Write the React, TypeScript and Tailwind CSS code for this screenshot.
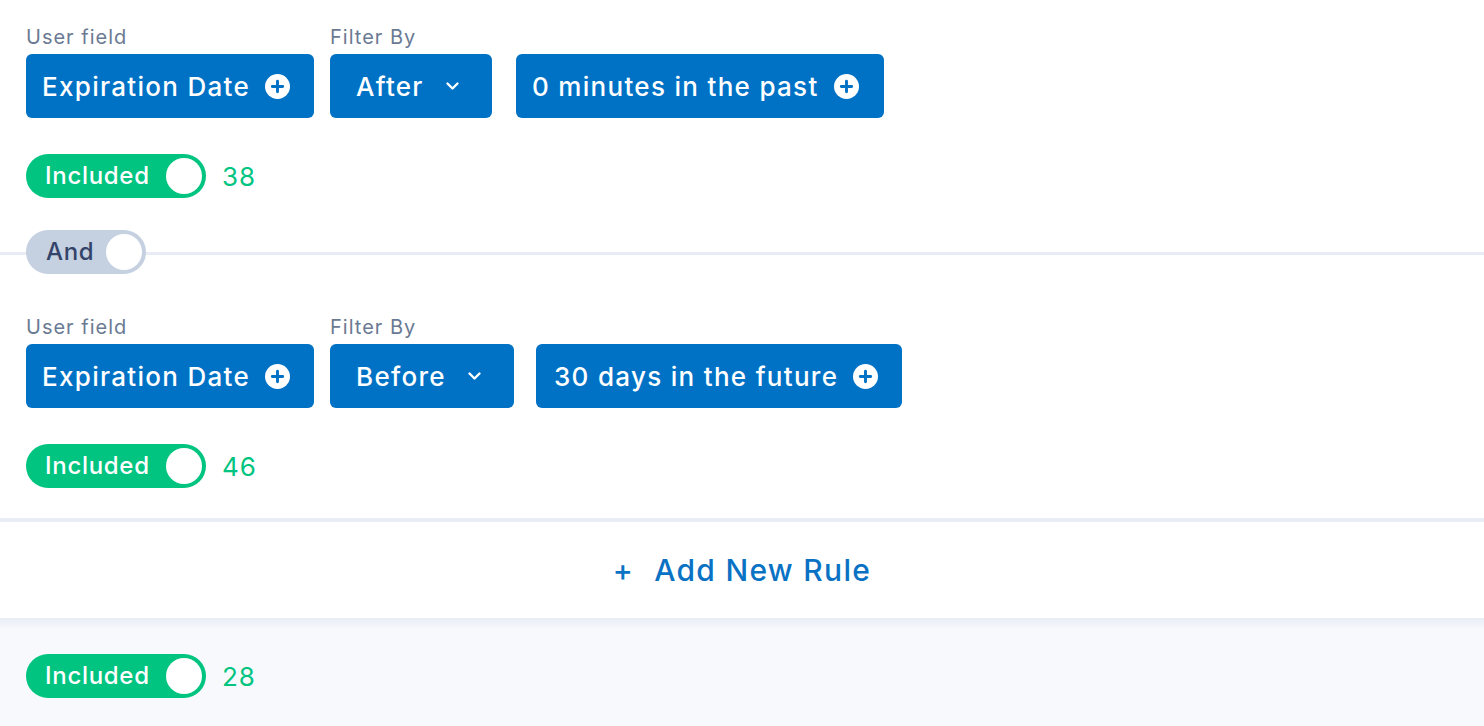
import React from "react";

const PlusCircle = () => (
  <svg width="25" height="25" viewBox="0 0 24 24" className="shrink-0">
    <circle cx="12" cy="12" r="12" fill="#ffffff" />
    <path d="M12 7v10M7 12h10" stroke="#0072c6" strokeWidth="2.8" strokeLinecap="round" />
  </svg>
);

const Chevron = () => (
  <svg width="15" height="10" viewBox="0 0 15 10" className="shrink-0">
    <path d="M2.5 2.5l5 5 5-5" stroke="#ffffff" strokeWidth="2.4" fill="none" strokeLinecap="round" strokeLinejoin="round" />
  </svg>
);

const Btn = ({ children, w }: { children: React.ReactNode; w: string }) => (
  <div className={`h-16 rounded-[6px] bg-[#0072c6] text-white flex items-center text-[26px] font-medium tracking-[1.3px] ${w}`}>
    {children}
  </div>
);

const Toggle = ({ n }: { n: number }) => (
  <div className="flex items-center gap-4">
    <div className="h-11 w-[180px] rounded-full bg-[#00c47f] flex items-center pl-[19px] pr-1 justify-between">
      <span className="text-white text-[24px] font-medium tracking-[0.7px]">Included</span>
      <span className="w-9 h-9 rounded-full bg-white" />
    </div>
    <span className="text-[#00c47f] text-[26px] tracking-[1px]">{n}</span>
  </div>
);

const Label = ({ children }: { children?: React.ReactNode }) => (
  <div className="text-[20px] text-[#6b7a93] leading-[28px] h-[34px] pt-[3px] tracking-[1px]">{children}</div>
);

const Rule = ({ filter, value, fw, vw, vpl, n }: { filter: string; value: string; fw: string; vw: string; vpl: string; n: number }) => (
  <div className="px-[26px]">
    <div className="flex gap-4">
      <div className="flex flex-col">
        <Label>User field</Label>
        <Btn w="w-[288px] pl-4 gap-[15px]">
          <span>Expiration Date</span>
          <PlusCircle />
        </Btn>
      </div>
      <div className="flex flex-col">
        <Label>Filter By</Label>
        <Btn w={fw}>
          <span className="pl-[26px] flex-1">{filter}</span>
          <span className="pr-[32px] flex"><Chevron /></span>
        </Btn>
      </div>
      <div className="flex flex-col">
        <Label />
        <Btn w={`${vw} ${vpl} gap-[15px]`}>
          <span>{value}</span>
          <PlusCircle />
        </Btn>
      </div>
    </div>
    <div className="mt-9">
      <Toggle n={n} />
    </div>
  </div>
);

export default function App() {
  return (
    <div className="w-[1484px] h-[726px] overflow-hidden bg-white" style={{ fontFamily: "Inter, 'Noto Sans', sans-serif" }}>
      <div className="pt-5">
        <Rule filter="After" value="0 minutes in the past" fw="w-[162px] mr-2" vw="w-[368px]" vpl="pl-4" n={38} />
      </div>
      <div className="relative mt-8 h-11 flex items-center">
        <div className="absolute left-0 right-0 top-[22px] h-[3px] bg-[#e8edf5]" />
        <div className="relative ml-[26px] h-11 w-[120px] rounded-full bg-[#c5d0e0] flex items-center justify-between pl-[20px] pr-1">
          <span className="text-[#33436a] text-[24px] font-medium tracking-[0.7px]">And</span>
          <span className="w-9 h-9 rounded-full bg-white" />
        </div>
      </div>
      <div className="pt-[36px]">
        <Rule filter="Before" value="30 days in the future" fw="w-[184px] mr-1.5" vw="w-[366px]" vpl="pl-[18px]" n={46} />
      </div>
      <div className="mt-[30px] h-1 bg-[#e8edf5]" />
      <div className="h-[96px] flex items-center justify-center text-[#0a72c4] text-[30px] font-medium gap-[20px] tracking-[1.3px]">
        <span className="text-[30px] font-medium">+</span>
        <span>Add New Rule</span>
      </div>
      <div className="bg-gradient-to-b from-[#e8edf5] to-[#f8f9fd] h-3" />
      <div className="bg-[#f8f9fd] h-[200px] px-[26px] pt-[24px]">
        <Toggle n={28} />
      </div>
    </div>
  );
}
